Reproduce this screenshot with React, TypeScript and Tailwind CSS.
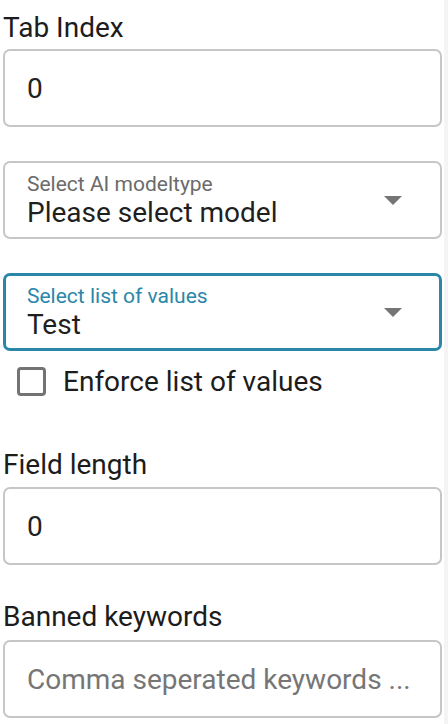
const font = { fontFamily: "Roboto, 'Noto Sans', sans-serif" };

const FieldLabel = ({ text, className }: { text: string; className: string }) => (
  <div className={`text-[28px] leading-[33px] text-[#1c1c1c] ${className}`}>{text}</div>
);

const TextBox = ({ value, placeholder }: { value?: string; placeholder?: string }) => (
  <div className="flex h-[78px] items-center rounded-[7px] border-2 border-[#c6c6c6] bg-white pl-[22px]">
    {value ? (
      <span className="text-[28px] leading-[33px] text-[#222222]">{value}</span>
    ) : (
      <span className="text-[28px] leading-[33px] text-[#767676]">{placeholder}</span>
    )}
  </div>
);

const Arrow = () => (
  <svg width="18" height="9" viewBox="0 0 10 5" className="shrink-0">
    <path d="M0 0l5 5 5-5z" fill="#757575" />
  </svg>
);

const SelectBox = ({
  label,
  value,
  focused,
}: {
  label: string;
  value: string;
  focused?: boolean;
}) => (
  <div
    className={
      focused
        ? "flex h-[78px] items-center justify-between rounded-[7px] border-[3px] border-[#2b87a9] bg-white pl-[21px] pr-[37px]"
        : "flex h-[78px] items-center justify-between rounded-[7px] border-2 border-[#c6c6c6] bg-white pl-[22px] pr-[38px]"
    }
  >
    <div className="flex flex-col">
      <span
        className={
          focused
            ? "text-[21px] leading-[25px] text-[#2b87a9]"
            : "text-[21px] leading-[25px] text-[#6b6b6b]"
        }
      >
        {label}
      </span>
      <span className="text-[28px] leading-[31px] text-[#1f1f1f]">{value}</span>
    </div>
    <Arrow />
  </div>
);

export default function App() {
  return (
    <div className="flex min-h-screen bg-white" style={font}>
      <div className="w-[444px] bg-white pl-[3px] pr-[2px]">
        <FieldLabel text="Tab Index" className="pt-[11px]" />
        <div className="mt-[5px]">
          <TextBox value="0" />
        </div>

        <div className="mt-[34px]">
          <SelectBox label="Select AI modeltype" value="Please select model" />
        </div>

        <div className="mt-[34px]">
          <SelectBox label="Select list of values" value="Test" focused />
        </div>

        <div className="mt-[14px] flex h-[33px] items-center">
          <div className="ml-[14px] h-[29px] w-[29px] shrink-0 rounded-[4px] border-[3px] border-[#737373] bg-white" />
          <span className="ml-[17px] text-[28px] leading-[33px] text-[#1c1c1c]">
            Enforce list of values
          </span>
        </div>

        <FieldLabel text="Field length" className="mt-[50px]" />
        <div className="mt-[6px]">
          <TextBox value="0" />
        </div>

        <FieldLabel text="Banned keywords" className="mt-[35px]" />
        <div className="mt-[7px]">
          <TextBox placeholder="Comma seperated keywords ..." />
        </div>
      </div>
      <div className="flex-1 bg-[#f4f4f4]" />
    </div>
  );
}
